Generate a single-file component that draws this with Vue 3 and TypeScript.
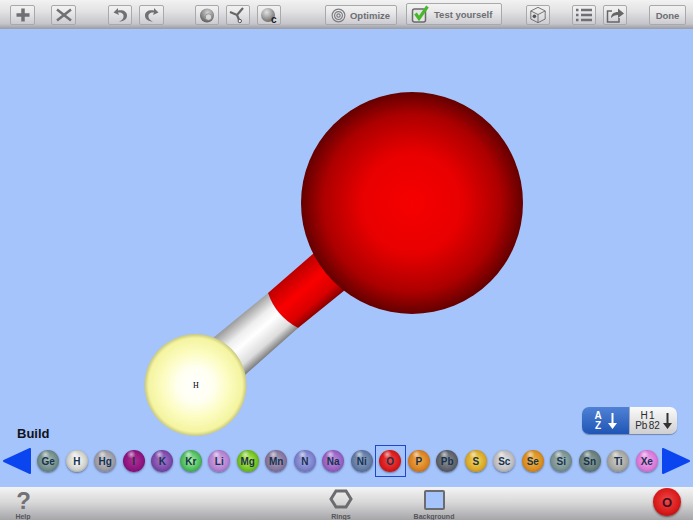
<script setup lang="ts">
// Molecule builder screen: toolbar, 3D view, element picker and bottom bar

interface Element {
  symbol: string
  light: string
  base: string
  dark: string
}

function el(symbol: string, light: string, base: string, dark: string): Element {
  return { symbol, light, base, dark }
}

const elements: Element[] = [
  el('Ge', '#a9bdb8', '#6f8a88', '#3e5557'),
  el('H', '#ffffff', '#cfcfca', '#6f7074'),
  el('Hg', '#c9c9d0', '#9a9aa4', '#595a66'),
  el('I', '#b0308f', '#8c1480', '#4f0a50'),
  el('K', '#a67ad0', '#7a48a8', '#46286c'),
  el('Kr', '#a8f0a0', '#4cb85c', '#1f6a3a'),
  el('Li', '#dcb0e8', '#b080d0', '#6d4a90'),
  el('Mg', '#c8f060', '#70c020', '#3a7a18'),
  el('Mn', '#ada0c0', '#84759c', '#4e4468'),
  el('N', '#a8acec', '#7a80c8', '#474c8a'),
  el('Na', '#c090e0', '#9460c0', '#583a84'),
  el('Ni', '#8ea4cc', '#6178a0', '#38496e'),
  el('O', '#f04848', '#d81818', '#7c0c14'),
  el('P', '#f4b050', '#d88020', '#84501c'),
  el('Pb', '#8c9098', '#5c6068', '#33363e'),
  el('S', '#f4d860', '#d8a828', '#80641c'),
  el('Sc', '#e8e8ea', '#bcbcc0', '#707078'),
  el('Se', '#f4b848', '#d88c20', '#80561c'),
  el('Si', '#a8bcbc', '#78908f', '#465a5e'),
  el('Sn', '#90a4a0', '#667c7a', '#3a4c50'),
  el('Ti', '#d0d0cc', '#a4a4a0', '#606468'),
  el('Xe', '#f4a8f0', '#d878d8', '#8a4c98'),
]

const selected = 'O'

function ballStyle(e: Element) {
  return {
    background: `radial-gradient(circle at 38% 20%, rgba(255,255,255,.6) 0, rgba(255,255,255,0) 20%), radial-gradient(circle at 50% 48%, ${e.light} 0%, ${e.base} 58%, ${e.dark} 100%)`,
  }
}
</script>

<template>
  <div class="app">
    <!-- Top toolbar -->
    <header class="toolbar">
      <button class="tool w1">
        <svg width="18" height="18" viewBox="0 0 18 18"><path d="M9 2.500v13M2.500 9h13" class="ico thick" /></svg>
      </button>
      <button class="tool w2">
        <svg width="18" height="18" viewBox="0 0 18 18"><path d="M2 3.500L16 14.500M16 3.500L2 14.500" class="ico" /></svg>
      </button>
      <button class="tool w3">
        <svg width="18" height="18" viewBox="0 0 18 18"><path d="M7 2L2.500 6.500 8 9l-1-2.500c3.500-.5 6 1 5.500 4.500-.3 2-2 3.500-4.500 4.500 5 0 8-2.500 8-6 0-4-4-6-9-5z" class="fill" /></svg>
      </button>
      <button class="tool w4">
        <svg width="18" height="18" viewBox="0 0 18 18"><path d="M11 2l4.500 4.500L10 9l1-2.500c-3.500-.5-6 1-5.500 4.500.3 2 2 3.500 4.500 4.500-5 0-8-2.500-8-6 0-4 4-6 9-5z" class="fill" /></svg>
      </button>
      <button class="tool w5">
        <svg width="20" height="18" viewBox="0 0 20 18">
          <defs>
            <radialGradient id="gsph" cx="55%" cy="30%" r="75%"><stop offset="0" stop-color="#d4d4d4" /><stop offset="1" stop-color="#555" /></radialGradient>
          </defs>
          <circle cx="10" cy="9.500" r="7" fill="url(#gsph)" />
          <circle cx="11.500" cy="11" r="3.200" fill="#d8d8d8" stroke="#777" stroke-width="0.600" />
        </svg>
      </button>
      <button class="tool w6">
        <svg width="20" height="18" viewBox="0 0 20 18">
          <path d="M2 6l7 3 6-7M9 9l2.500 6" fill="none" stroke="#666" stroke-width="2.200" />
          <circle cx="11.800" cy="15" r="1.700" fill="#f2f2f2" stroke="#555" />
        </svg>
      </button>
      <button class="tool w7">
        <svg width="20" height="18" viewBox="0 0 20 18">
          <defs>
            <radialGradient id="gsph2" cx="40%" cy="30%" r="75%"><stop offset="0" stop-color="#e2e2e2" /><stop offset="1" stop-color="#666" /></radialGradient>
          </defs>
          <circle cx="9" cy="9" r="7" fill="url(#gsph2)" />
          <text x="12" y="16.500" class="c-mark">c</text>
        </svg>
      </button>
      <button class="tool optimize">
        <svg width="15" height="15" viewBox="0 0 16 16">
          <circle cx="8" cy="8" r="6.800" class="ring" />
          <circle cx="8" cy="8" r="4.200" class="ring" />
          <circle cx="8" cy="8" r="1.800" class="ring" />
        </svg>
        <span>Optimize</span>
      </button>
      <button class="tool test">
        <svg width="22" height="20" viewBox="0 0 22 20">
          <rect x="2.500" y="5" width="13" height="13" rx="2" fill="#e4e4e4" stroke="#6a6a6a" stroke-width="1.500" />
          <path d="M5.500 9.500l3.500 5L17.500 2.500" fill="none" stroke="#47b82c" stroke-width="3.200" />
        </svg>
        <span>Test yourself</span>
      </button>
      <button class="tool w8">
        <svg width="20" height="18" viewBox="0 0 20 20">
          <path d="M10 1.500l8 4v9l-8 4-8-4v-9zM2 5.500L10 9.500l8-4M10 9.500v9" fill="none" stroke="#666" stroke-width="1" />
          <circle cx="6" cy="11.500" r="2" fill="#555" />
        </svg>
      </button>
      <button class="tool w9">
        <svg width="18" height="16" viewBox="0 0 18 16"><path d="M1 3h2.500M6 3h11M1 8h2.500M6 8h11M1 13h2.500M6 13h11" class="ico" /></svg>
      </button>
      <button class="tool w10">
        <svg width="20" height="18" viewBox="0 0 20 18">
          <path d="M7 5H2.500v11H14v-4" fill="none" stroke="#666" stroke-width="1.500" />
          <path d="M6 12c0-4 3-6 7-6V2.500l6 5-6 4.500V9c-3 0-5 1-7 3z" fill="#666" />
        </svg>
      </button>
      <button class="tool done">Done</button>
    </header>

    <!-- 3D view with the molecule -->
    <main class="view">
      <svg class="molecule" width="693" height="458" viewBox="0 29 693 458">
        <defs>
          <radialGradient id="oxygen" cx="0.5" cy="0.5" r="0.5">
            <stop offset="0" stop-color="#f60000" />
            <stop offset="0.45" stop-color="#e80000" />
            <stop offset="0.8" stop-color="#ac0000" />
            <stop offset="1" stop-color="#640000" />
          </radialGradient>
          <radialGradient id="hydrogen" cx="0.5" cy="0.5" r="0.5">
            <stop offset="0" stop-color="#ffffff" />
            <stop offset="0.35" stop-color="#fffff0" />
            <stop offset="0.65" stop-color="#fcfcc0" />
            <stop offset="0.92" stop-color="#f4f4a0" />
            <stop offset="1" stop-color="#c8c880" />
          </radialGradient>
          <linearGradient id="bond-red" gradientUnits="userSpaceOnUse" x1="290" y1="272" x2="322" y2="309">
            <stop offset="0" stop-color="#b80000" />
            <stop offset="0.45" stop-color="#fa0000" />
            <stop offset="0.8" stop-color="#d80000" />
            <stop offset="1" stop-color="#880000" />
          </linearGradient>
          <linearGradient id="bond-white" gradientUnits="userSpaceOnUse" x1="240" y1="315" x2="272" y2="352">
            <stop offset="0" stop-color="#999999" />
            <stop offset="0.3" stop-color="#eeeeee" />
            <stop offset="0.5" stop-color="#ffffff" />
            <stop offset="0.8" stop-color="#dddddd" />
            <stop offset="1" stop-color="#777777" />
          </linearGradient>
        </defs>
        <path d="M213 338L268 293Q276 316 298 328L245 375Z" fill="url(#bond-white)" />
        <path d="M268 293L314 253L345 290L298 328Q276 316 268 293Z" fill="url(#bond-red)" />
        <circle cx="195.500" cy="385" r="51" fill="url(#hydrogen)" />
        <circle cx="412" cy="203" r="111" fill="url(#oxygen)" />
        <text x="196" y="388" class="atom-label">H</text>
      </svg>

      <div class="spacer"></div>

      <div class="sort-row">
        <div class="sort">
          <div class="sort-az">
            <span class="az-letters"><span>A</span><span>Z</span></span>
            <svg width="9" height="16" viewBox="0 0 9 16"><path d="M3.500 0h2v10H9l-4.500 6L0 10h3.500z" fill="#fff" /></svg>
          </div>
          <div class="sort-num">
            <span class="num-letters"><span>H 1</span><span>Pb 82</span></span>
            <svg width="9" height="16" viewBox="0 0 9 16"><path d="M3.500 0h2v10H9l-4.500 6L0 10h3.500z" fill="#333" /></svg>
          </div>
        </div>
      </div>

      <div class="build-label">Build</div>

      <!-- Element picker -->
      <div class="picker">
        <svg class="nav" width="29" height="26" viewBox="0 0 29 26"><path d="M1 13L27 1v24z" fill="#0b45f0" stroke="#0b45f0" stroke-width="2" stroke-linejoin="round" /></svg>
        <div class="elements">
          <div v-for="e in elements" :key="e.symbol" class="slot" :class="{ selected: e.symbol === selected }">
            <div class="ball" :style="ballStyle(e)">{{ e.symbol }}</div>
          </div>
        </div>
        <svg class="nav" width="29" height="26" viewBox="0 0 29 26"><path d="M27 13L1 1v24z" fill="#0b45f0" stroke="#0b45f0" stroke-width="2" stroke-linejoin="round" /></svg>
      </div>
    </main>

    <!-- Bottom bar -->
    <footer class="bottom">
      <div class="bottom-item help">
        <span class="qmark">?</span>
        <span class="caption">Help</span>
      </div>
      <div class="bottom-item rings">
        <svg width="24" height="20" viewBox="0 0 24 20"><path d="M7 2h10l5 8-5 8H7l-5-8z" fill="none" stroke="#6c6c70" stroke-width="3" /></svg>
        <span class="caption">Rings</span>
      </div>
      <div class="bottom-item background">
        <div class="swatch"></div>
        <span class="caption">Background</span>
      </div>
      <div class="current">O</div>
    </footer>
  </div>
</template>

<style>
html, body {
  margin: 0;
  background: #a5c4fb;
}
</style>

<style scoped>
.app {
  width: 693px;
  height: 520px;
  display: flex;
  flex-direction: column;
  overflow: hidden;
  font-family: "Liberation Sans", Arial, sans-serif;
  background: #a5c4fb;
}

/* Top toolbar */
.toolbar {
  height: 29px;
  flex: none;
  display: flex;
  align-items: flex-start;
  padding-top: 5px;
  box-sizing: border-box;
  background: linear-gradient(#f2f2f2 0%, #e2e2e4 40%, #c4c4ca 82%, #9a9ca4 100%);
}

.tool {
  height: 20px;
  box-sizing: border-box;
  padding: 0;
  flex: none;
  display: flex;
  align-items: center;
  justify-content: center;
  border: 1px solid #a9a9ac;
  border-radius: 2px;
  background: linear-gradient(rgba(255, 255, 255, 0.35), rgba(255, 255, 255, 0.12));
  color: #6e6e72;
  font: bold 9.500px "Liberation Sans", Arial, sans-serif;
}

.w1 { width: 25px; margin-left: 10px; }
.w2 { width: 25px; margin-left: 16px; }
.w3 { width: 24px; margin-left: 32px; }
.w4 { width: 25px; margin-left: 7px; }
.w5 { width: 24px; margin-left: 31px; }
.w6 { width: 24px; margin-left: 7px; }
.w7 { width: 24px; margin-left: 7px; }
.optimize { width: 72px; margin-left: 44px; gap: 4px; padding-right: 1px; }
.test { width: 96px; margin-left: 9px; gap: 2px; justify-content: flex-start; padding-left: 3px; height: 22px; margin-top: -2px; }
.w8 { width: 24px; margin-left: 24px; }
.w9 { width: 24px; margin-left: 22px; }
.w10 { width: 24px; margin-left: 7px; }
.done { width: 37px; margin-left: 22px; }

.ico {
  fill: none;
  stroke: #707074;
  stroke-width: 2.500;
}

.ico.thick {
  stroke-width: 3.500;
}

.fill {
  fill: #707074;
}

.ring {
  fill: none;
  stroke: #7c7c80;
  stroke-width: 1.200;
}

.c-mark {
  font: bold 10px "Liberation Sans", Arial, sans-serif;
  fill: #222;
}

/* 3D view */
.view {
  position: relative;
  flex: 1;
  display: flex;
  flex-direction: column;
  justify-content: flex-end;
  padding-bottom: 11px;
  box-sizing: border-box;
}

.molecule {
  position: absolute;
  top: 0;
  left: 0;
}

.atom-label {
  font: 8px "Liberation Serif", serif;
  text-anchor: middle;
  fill: #000;
}

.spacer {
  flex: 1;
}

.sort-row,
.build-label,
.picker {
  position: relative;
}

.sort-row {
  display: flex;
  justify-content: flex-end;
  padding-right: 16px;
  margin-bottom: -8px;
}

.sort {
  width: 95px;
  height: 27px;
  display: flex;
  border-radius: 7px;
  overflow: hidden;
  box-shadow: 0 1px 1px rgba(60, 70, 100, 0.5);
}

.sort-az {
  width: 47px;
  display: flex;
  align-items: center;
  justify-content: center;
  gap: 6px;
  background: linear-gradient(#4f82d6, #1f55b4);
  color: #fff;
}

.sort-num {
  flex: 1;
  display: flex;
  align-items: center;
  justify-content: center;
  gap: 3px;
  background: linear-gradient(#fbfbfb, #cfcfd2);
  color: #2a2a2a;
  border-left: 1px solid #aab;
}

.az-letters,
.num-letters {
  display: flex;
  flex-direction: column;
  align-items: center;
  font-size: 10px;
  line-height: 10px;
  font-weight: bold;
}

.num-letters {
  font-weight: normal;
  word-spacing: -1.500px;
}

.build-label {
  font-size: 13px;
  font-weight: bold;
  line-height: 16px;
  color: #10131c;
  padding-left: 17px;
  margin-bottom: 4px;
}

.picker {
  height: 30px;
  display: flex;
  align-items: center;
  padding-left: 3px;
}

.nav {
  flex: none;
}

.elements {
  display: flex;
  margin-left: 2px;
  margin-right: 1px;
  width: 627px;
}

.slot {
  width: 28.500px;
  height: 30px;
  flex: none;
  box-sizing: border-box;
  display: flex;
  align-items: center;
  justify-content: center;
}

.slot.selected {
  outline: 1px solid #1e48c8;
}

.ball {
  width: 22px;
  height: 22px;
  flex: none;
  border-radius: 50%;
  display: flex;
  align-items: center;
  justify-content: center;
  font-size: 10px;
  font-weight: bold;
  color: #17324c;
  box-shadow: 0 1px 2px rgba(40, 50, 90, 0.55);
}

/* Bottom bar */
.bottom {
  position: relative;
  height: 33px;
  flex: none;
  background: linear-gradient(#f4f4f4, #d9d9da 45%, #a6a6aa);
}

.bottom-item {
  position: absolute;
  top: 2px;
  display: flex;
  flex-direction: column;
  align-items: center;
  width: 60px;
}

.help { left: -7px; }
.help .qmark { margin-left: 1px; }
.rings { left: 311px; }
.background { left: 404px; }

.qmark {
  font-size: 24px;
  font-weight: bold;
  line-height: 24px;
  height: 24px;
  color: #727276;
}

.caption {
  font-size: 7px;
  font-weight: bold;
  line-height: 7px;
  color: #55555a;
}

.swatch {
  width: 21px;
  height: 20px;
  box-sizing: border-box;
  border: 2px solid #6c6c70;
  border-radius: 2px;
  background: #a5c4fb;
  margin-top: 1px;
  margin-bottom: 3px;
}

.rings svg {
  margin-bottom: 4px;
}

.current {
  position: absolute;
  left: 653px;
  top: 1px;
  width: 28px;
  height: 28px;
  border-radius: 50%;
  display: flex;
  align-items: center;
  justify-content: center;
  font-size: 13px;
  font-weight: bold;
  color: #3a1020;
  background: radial-gradient(circle at 50% 45%, #f04848, #d81818 60%, #7c0c14);
  box-shadow: 0 1px 2px rgba(0, 0, 0, 0.5);
}
</style>
